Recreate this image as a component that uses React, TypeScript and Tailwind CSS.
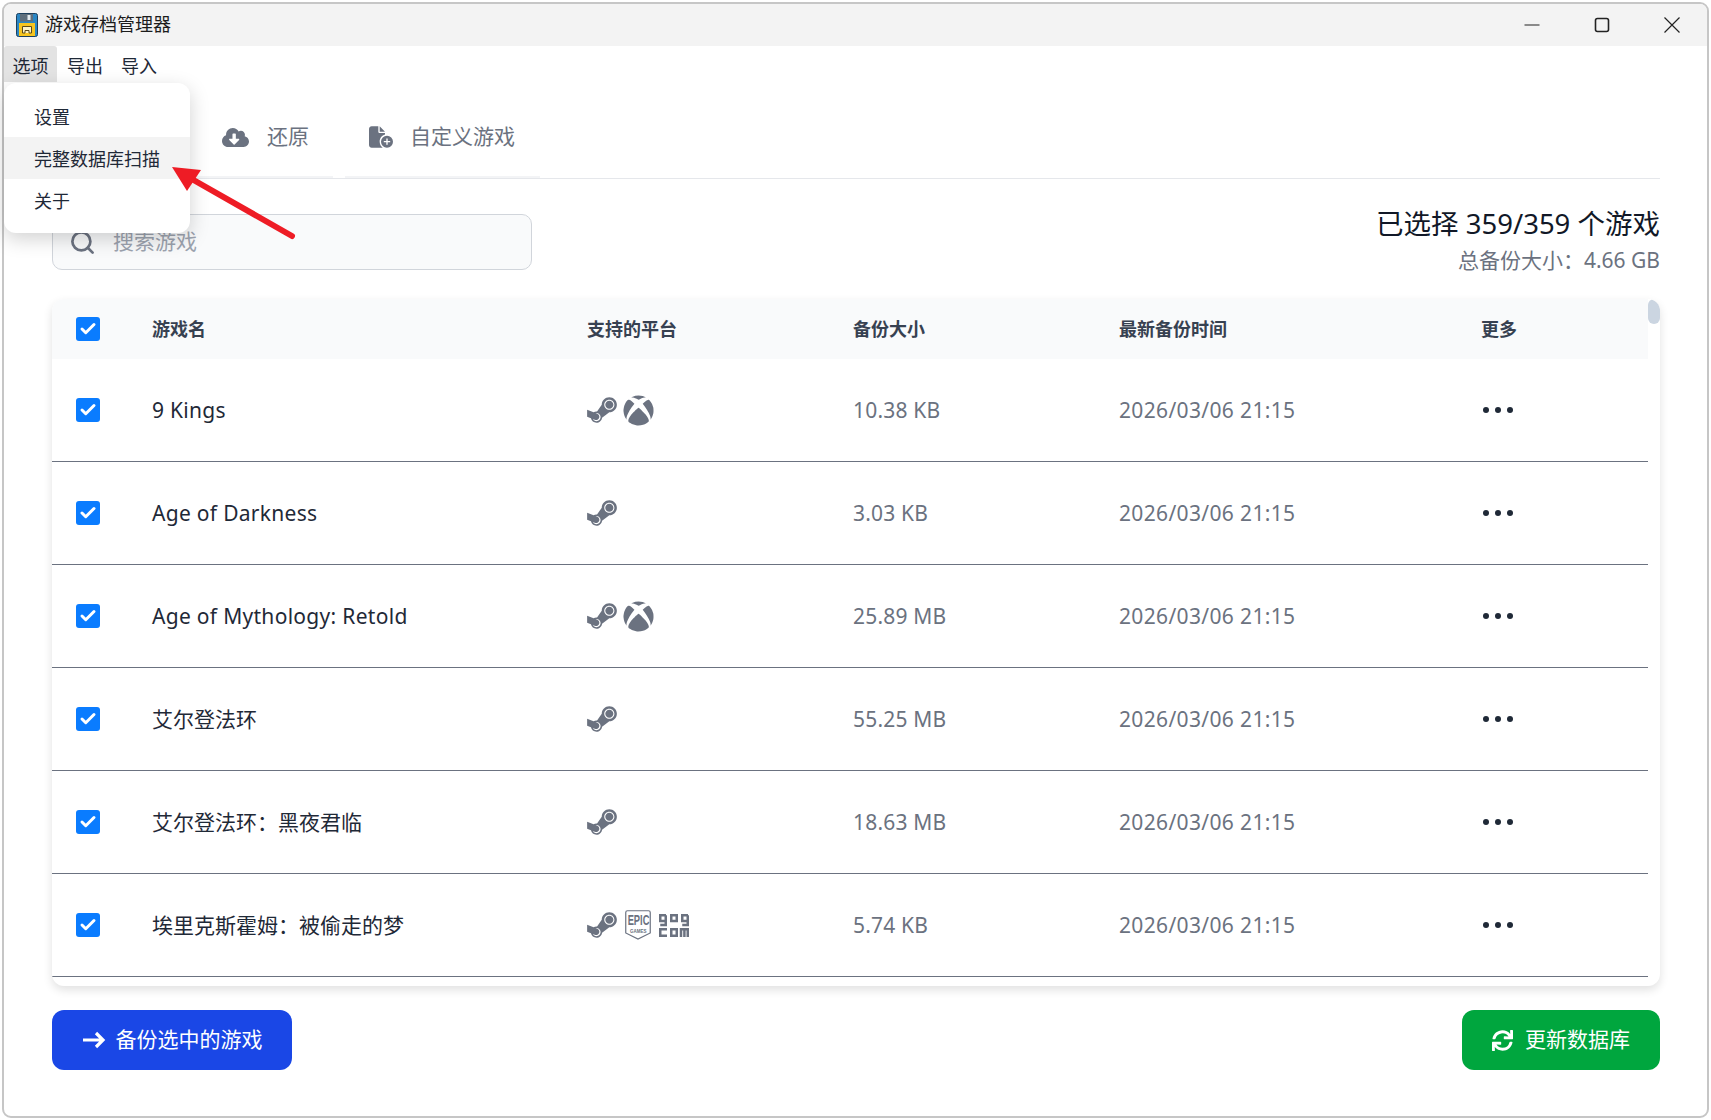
import { FaCloudDownloadAlt, FaSteamSymbol, FaSync, FaXbox } from "react-icons/fa";
import { FaFileCirclePlus } from "react-icons/fa6";
import { Check, Search } from "lucide-react";

const font = "font-['Noto_Sans','Noto_Sans_CJK_SC',sans-serif]";

const games = [
  { name: "9 Kings", latin: true, size: "10.38 KB", platforms: ["steam", "xbox"] },
  { name: "Age of Darkness", latin: true, size: "3.03 KB", platforms: ["steam"] },
  { name: "Age of Mythology: Retold", latin: true, size: "25.89 MB", platforms: ["steam", "xbox"] },
  { name: "艾尔登法环", latin: false, size: "55.25 MB", platforms: ["steam"] },
  { name: "艾尔登法环：黑夜君临", latin: false, size: "18.63 MB", platforms: ["steam"] },
  { name: "埃里克斯霍姆：被偷走的梦", latin: false, size: "5.74 KB", platforms: ["steam", "epic", "gog"] },
];

function Checkbox() {
  return (
    <span className="flex h-6 w-6 items-center justify-center rounded-[3px] bg-[#0a7cff]">
      <Check size={18} strokeWidth={4} className="text-white" />
    </span>
  );
}

function GogLogo() {
  return (
    <svg viewBox="0 0 30 23" className="ml-[8px] h-[23px] w-[30px]" fill="none" stroke="#6b7280" strokeWidth="2.5">
      {/* gog */}
      <path d="M7 1.25H1.25V7H6.75M6.75 1.25V11H1.25" />
      <rect x="12.25" y="1.25" width="5.5" height="5.75" />
      <path d="M29 1.25H23.25V7H28.75M28.75 1.25V11H23.25" />
      {/* com */}
      <path d="M8 15.25H1.25V21.75H8" />
      <rect x="12.25" y="15.25" width="5.5" height="6.5" />
      <path d="M22 23V15.25H28.75V23M25.4 15.25V23" />
    </svg>
  );
}

function EpicLogo() {
  return (
    <span className="relative flex h-[30px] w-[26px] flex-col items-center font-['Liberation_Sans',sans-serif] font-bold text-[#6b7280]">
      <svg viewBox="0 0 26 30" className="absolute inset-0 h-[30px] w-[26px]" fill="none">
        <path d="M2.5 0.75H23.5Q25.25 0.75 25.25 2.5V23L13 29L0.75 23V2.5Q0.75 0.75 2.5 0.75Z" stroke="#6b7280" strokeWidth="1.2" />
      </svg>
      <span className="mt-[3px] origin-center scale-x-[0.62] text-[15px] leading-[14px]">EPIC</span>
      <span className="mt-[1px] origin-center scale-x-[0.9] text-[5px] leading-[6px]">GAMES</span>
    </span>
  );
}

function PlatformIcon({ kind }: { kind: string }) {
  if (kind === "steam") return <FaSteamSymbol className="h-[34px] w-[30px] text-[#6b7280]" />;
  if (kind === "xbox") return <FaXbox className="ml-[6px] h-[31px] w-[31px] text-[#6b7280]" />;
  if (kind === "epic") return <span className="ml-[8px] flex"><EpicLogo /></span>;
  return <GogLogo />;
}

function FloppyLogo() {
  return (
    <svg viewBox="0 0 22 24" className="h-6 w-[22px]">
      <rect x="0.5" y="0.5" width="21" height="23" rx="2" fill="#2a86c4" stroke="#1d3f5c" />
      <rect x="4" y="1" width="13" height="7.5" fill="#5f6f7c" />
      <rect x="11.5" y="2" width="3" height="5" fill="#e5ecef" />
      <rect x="3" y="10" width="16" height="13" fill="#f7c51e" />
      <path d="M6.5 20v-6.5h9V20M6.5 20h2.5v-2.5h4V20h2.5" fill="#fdf3c4" stroke="#5b4a1a" strokeWidth="1" />
    </svg>
  );
}

export default function App() {
  return (
    <div className={`${font} relative flex h-[1120px] w-[1711px] flex-col overflow-hidden bg-white`}>
      <div className="ml-[2px] mt-[2px] flex h-[1116px] w-[1707px] flex-col overflow-hidden rounded-[9px] border-2 border-[#c6c6c6] bg-white">
        {/* title bar */}
        <div className="flex h-[42px] shrink-0 items-center bg-[#f3f3f3] pb-[1px] pl-[12px] text-[18px] text-[#1c1c1c]">
          <FloppyLogo />
          <span className="ml-[7px]">游戏存档管理器</span>
          <div className="ml-auto flex items-center gap-[54px] pr-[27px]">
            <svg viewBox="0 0 16 16" className="h-4 w-4" stroke="#222" strokeWidth="1.2">
              <path d="M0.5 8h15" />
            </svg>
            <svg viewBox="0 0 16 16" className="h-4 w-4" fill="none" stroke="#222" strokeWidth="1.6">
              <rect x="1.5" y="1.5" width="13" height="13" rx="2" />
            </svg>
            <svg viewBox="0 0 16 16" className="h-4 w-4" stroke="#222" strokeWidth="1.2">
              <path d="M0.5 0.5l15 15M15.5 0.5l-15 15" />
            </svg>
          </div>
        </div>

        {/* menu bar */}
        <div className="flex h-[36px] shrink-0 items-center pt-[5px] text-[18px] text-[#1f2937]">
          <span className="-mt-[5px] flex h-[36px] w-[53px] items-center justify-center rounded-t-[3px] bg-[#e3e3e3] pt-[5px]">选项</span>
          <span className="ml-[10px]">导出</span>
          <span className="ml-[18px]">导入</span>
        </div>

        <div className="flex min-h-0 flex-1 flex-col pl-[48px] pr-[47px]">
          {/* tabs */}
          <div className="mt-[26px] flex h-[71px] shrink-0 items-stretch border-b border-[#e5e7eb] text-[21px] text-[#6b7280]">
            <div className="w-[138px]" />
            <div className="flex w-[143px] items-center gap-[18px] border-b-2 border-[#f3f4f6] pb-[10px] pl-[32px]">
              <FaCloudDownloadAlt className="h-[27px] w-[27px]" />
              <span>还原</span>
            </div>
            <div className="ml-[12px] flex w-[195px] items-center gap-[17px] border-b-2 border-[#f3f4f6] pb-[10px] pl-[24px]">
              <FaFileCirclePlus className="h-[24px] w-[24px]" />
              <span>自定义游戏</span>
            </div>
          </div>

          {/* search + totals */}
          <div className="mt-[35px] flex h-[56px] shrink-0 items-start justify-between">
            <div className="flex h-[56px] w-[480px] items-center rounded-[10px] border border-[#d1d5db] bg-[#f9fafb] pl-[16px] text-[21px] text-[#9ca3af]">
              <Search size={27} strokeWidth={2.4} className="text-[#6b7280]" />
              <span className="ml-[17px]">搜索游戏</span>
            </div>
            <div className="-mt-[9px] flex flex-col items-end">
              <span className="text-[27.5px] leading-[38px] text-[#111827]">已选择 359/359 个游戏</span>
              <span className="mt-[2px] text-[21px] leading-[30px] text-[#6b7280]">总备份大小：4.66 GB</span>
            </div>
          </div>

          {/* table */}
          <div className="relative mt-[29px] h-[687px] shrink-0 overflow-hidden rounded-[12px] bg-white shadow-[0_4px_10px_rgba(0,0,0,0.12)]">
            <div className="mr-[12px] flex h-[60px] items-center bg-[#f9fafb] text-[18px] font-bold text-[#374151]">
              <span className="ml-[24px] w-[76px] shrink-0"><Checkbox /></span>
              <span className="w-[435px] shrink-0">游戏名</span>
              <span className="w-[266px] shrink-0">支持的平台</span>
              <span className="w-[266px] shrink-0">备份大小</span>
              <span className="w-[362px] shrink-0">最新备份时间</span>
              <span>更多</span>
            </div>
            {games.map((game) => (
              <div key={game.name} className="mr-[12px] flex h-[103px] items-center border-b border-[#6b7280] text-[21px]">
                <span className="ml-[24px] w-[76px] shrink-0"><Checkbox /></span>
                <span className={`w-[435px] shrink-0 pt-[2px] text-[#1f2937] ${game.latin ? "tracking-[0.3px]" : ""}`}>{game.name}</span>
                <span className="flex w-[266px] shrink-0 items-center">
                  {game.platforms.map((p) => (
                    <PlatformIcon key={p} kind={p} />
                  ))}
                </span>
                <span className="w-[266px] shrink-0 pt-[2px] tracking-[0.2px] text-[#6b7280]">{game.size}</span>
                <span className="w-[362px] shrink-0 pt-[2px] tracking-[0.35px] text-[#6b7280]">2026/03/06 21:15</span>
                <span className="flex gap-[6px] pl-[2px]">
                  <i className="h-[6px] w-[6px] rounded-full bg-[#1f2937]" />
                  <i className="h-[6px] w-[6px] rounded-full bg-[#1f2937]" />
                  <i className="h-[6px] w-[6px] rounded-full bg-[#1f2937]" />
                </span>
              </div>
            ))}
            <div className="absolute right-0 top-0 h-[25px] w-[12px] rounded-full bg-[#cbd5e1]" />
          </div>

          {/* actions */}
          <div className="mt-[24px] flex shrink-0 justify-between text-[21px] text-white">
            <button className="flex h-[60px] w-[240px] items-center justify-center gap-[10px] rounded-[12px] bg-[#1a47e6]">
              <svg viewBox="0 0 24 20" className="h-5 w-6" fill="none" stroke="white" strokeWidth="3.2">
                <path d="M1 10h20M14 3l7 7-7 7" />
              </svg>
              <span>备份选中的游戏</span>
            </button>
            <button className="flex h-[60px] w-[198px] items-center justify-center gap-[12px] rounded-[12px] bg-[#00a63e]">
              <FaSync className="h-[21px] w-[21px]" />
              <span>更新数据库</span>
            </button>
          </div>
        </div>
      </div>

      {/* open menu */}
      <div className="absolute left-[4px] top-[83px] flex w-[186px] flex-col overflow-hidden rounded-[12px] bg-white py-[12px] text-[18px] text-[#1f2937] shadow-[0_6px_20px_rgba(0,0,0,0.18)]">
        <div className="flex h-[42px] items-center pl-[30px] pt-[2px]">设置</div>
        <div className="flex h-[42px] items-center bg-[#f3f3f3] pl-[30px] pt-[2px]">完整数据库扫描</div>
        <div className="flex h-[42px] items-center pl-[30px] pt-[2px]">关于</div>
      </div>

      {/* annotation arrow */}
      <svg viewBox="0 0 1711 1120" className="absolute left-0 top-0 h-[1120px] w-[1711px]" fill="none">
        <path d="M292 236L190 178" stroke="#ee1c25" strokeWidth="6" strokeLinecap="round" />
        <path d="M172 167L201 170L187 191Z" fill="#ee1c25" />
      </svg>
    </div>
  );
}
